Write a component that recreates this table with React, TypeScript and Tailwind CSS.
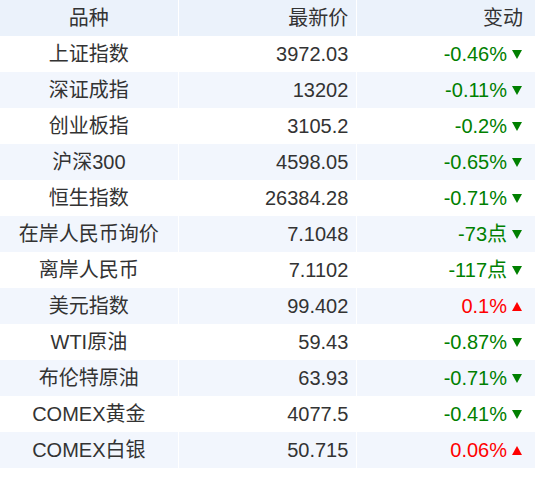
import React from 'react';

type Row = { name: string; price: string; change: string; up: boolean };

const ROWS: Row[] = [
  { name: '上证指数', price: '3972.03', change: '-0.46%', up: false },
  { name: '深证成指', price: '13202', change: '-0.11%', up: false },
  { name: '创业板指', price: '3105.2', change: '-0.2%', up: false },
  { name: '沪深300', price: '4598.05', change: '-0.65%', up: false },
  { name: '恒生指数', price: '26384.28', change: '-0.71%', up: false },
  { name: '在岸人民币询价', price: '7.1048', change: '-73点', up: false },
  { name: '离岸人民币', price: '7.1102', change: '-117点', up: false },
  { name: '美元指数', price: '99.402', change: '0.1%', up: true },
  { name: 'WTI原油', price: '59.43', change: '-0.87%', up: false },
  { name: '布伦特原油', price: '63.93', change: '-0.71%', up: false },
  { name: 'COMEX黄金', price: '4077.5', change: '-0.41%', up: false },
  { name: 'COMEX白银', price: '50.715', change: '0.06%', up: true },
];

const Arrow: React.FC<{ up: boolean }> = ({ up }) => (
  <svg width="10" height="9" viewBox="0 0 10 9" className="ml-[5px] shrink-0" fill="currentColor">
    {up ? <polygon points="5,0 10,9 0,9" /> : <polygon points="0,0 10,0 5,9" />}
  </svg>
);

const App: React.FC = () => {
  return (
    <div
      className="w-[535px] h-[480px] bg-white text-[20px] text-[#333]"
      style={{ fontFamily: '"Liberation Sans", "Noto Sans CJK SC", sans-serif' }}
    >
      {/* Header */}
      <div className="grid grid-cols-3 gap-x-px h-9 leading-9">
        <div className="bg-[#ebf2fb] text-center">品种</div>
        <div className="bg-[#ebf2fb] text-right pr-[8px]">最新价</div>
        <div className="bg-[#ebf2fb] text-right pr-[12px]">变动</div>
      </div>

      {ROWS.map((r, i) => {
        const bg = i % 2 === 1 ? 'bg-[#f2f6fd]' : 'bg-white';
        return (
          <div key={r.name} className="grid grid-cols-3 gap-x-px h-9 leading-9">
            <div className={`${bg} text-center whitespace-nowrap`}>{r.name}</div>
            <div className={`${bg} text-right pr-[8px]`}>{r.price}</div>
            <div
              className={`${bg} flex items-center justify-end pr-[13px] ${
                r.up ? 'text-[#ff0000]' : 'text-[#008000]'
              }`}
            >
              <span>{r.change}</span>
              <Arrow up={r.up} />
            </div>
          </div>
        );
      })}
    </div>
  );
};

export default App;
